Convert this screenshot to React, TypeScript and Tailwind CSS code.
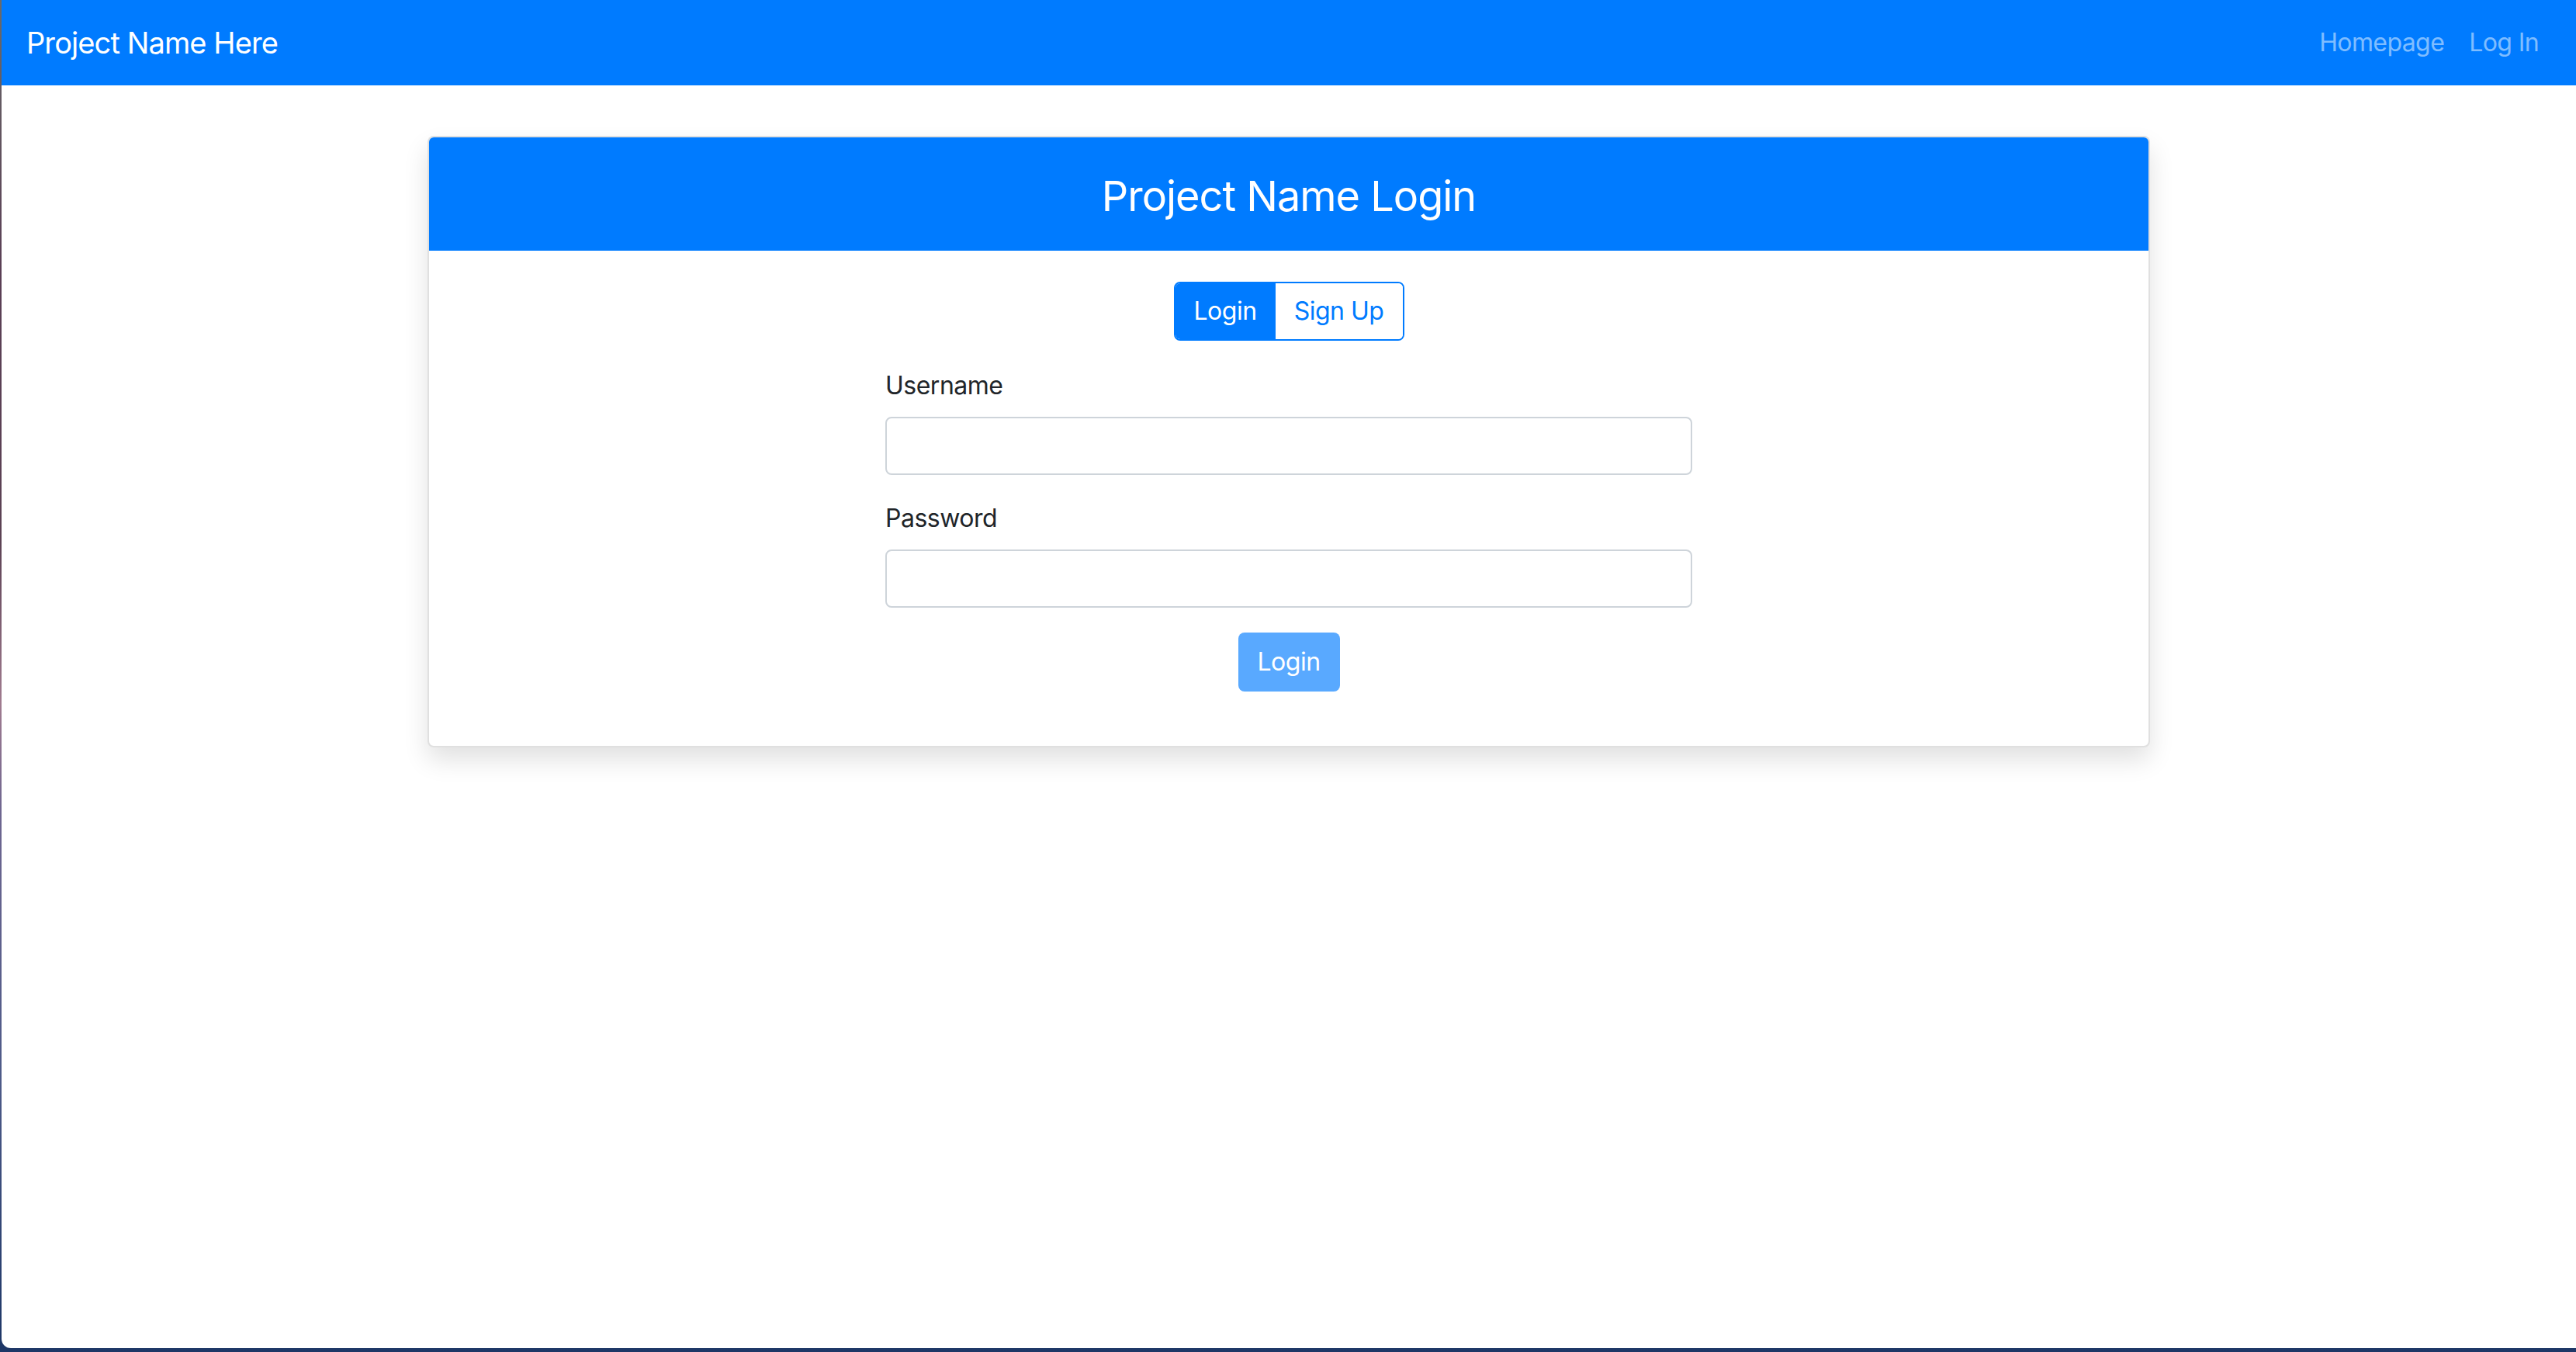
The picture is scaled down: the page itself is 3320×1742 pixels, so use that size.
import React from 'react';

const font = { fontFamily: 'Inter, "Noto Sans", sans-serif' };

const Navbar: React.FC = () => (
  <nav className="h-[110px] shrink-0 bg-[#007bff] pl-[32px] pr-[32px] flex items-center justify-between">
    <span className="text-[38px] text-white tracking-[-0.9px]">Project Name Here</span>
    <div className="flex items-center">
      <a className="px-[16px] text-[32px] text-white/50 tracking-[-0.6px]">Homepage</a>
      <a className="px-[16px] text-[32px] text-white/50 tracking-[-0.6px]">Log In</a>
    </div>
  </nav>
);

const Field: React.FC<{ label: string; type?: string }> = ({ label, type = 'text' }) => (
  <div className="mb-[32px]">
    <label className="block text-[32px] leading-[48px] text-[#212529] mb-[16px] tracking-[-0.5px]">{label}</label>
    <input
      type={type}
      className="block w-full h-[75px] rounded-[8px] border-2 border-[#ced4da] bg-white px-[24px] text-[32px] outline-none"
    />
  </div>
);

const LoginCard: React.FC = () => (
  <div className="mt-[65px] mx-auto w-[2220px] rounded-[8px] border-2 border-black/[0.12] bg-white shadow-[0_16px_32px_rgba(0,0,0,0.12)] overflow-hidden">
    {/* Header */}
    <div className="h-[146px] bg-[#007bff] flex items-center justify-center">
      <h3 className="text-[54px] text-white tracking-[-1px] translate-y-[2px]">Project Name Login</h3>
    </div>

    {/* Body */}
    <div className="flex flex-col items-center pt-[40px] pb-[70px]">
      <div className="flex h-[76px] rounded-[8px] border-2 border-[#007bff] overflow-hidden">
        <button className="w-[129px] bg-[#007bff] text-white text-[32px] tracking-[-0.5px]">Login</button>
        <button className="w-[164px] bg-white text-[#007bff] text-[32px] tracking-[-0.5px]">Sign Up</button>
      </div>

      <form className="w-[1040px] mt-[34px]">
        <Field label="Username" />
        <Field label="Password" type="password" />
        <div className="flex justify-center mt-[2px]">
          <button
            type="button"
            disabled
            className="h-[76px] w-[131px] rounded-[8px] bg-[#59a9ff] text-white text-[32px] tracking-[-0.5px]"
          >
            Login
          </button>
        </div>
      </form>
    </div>
  </div>
);

const App: React.FC = () => {
  return (
    <div
      className="w-[3320px] h-[1742px] overflow-hidden bg-[linear-gradient(to_bottom,#6a6a6a_0%,#5a3f55_20%,#5c4254_40%,#a07b8f_52%,#6e6690_60%,#4d5a88_80%,#1d3666_100%)] flex"
      style={font}
    >
      <div className="ml-[2px] w-[3318px] h-[1737px] bg-white rounded-bl-[12px] flex flex-col">
        <Navbar />
        <LoginCard />
      </div>
    </div>
  );
};

export default App;
